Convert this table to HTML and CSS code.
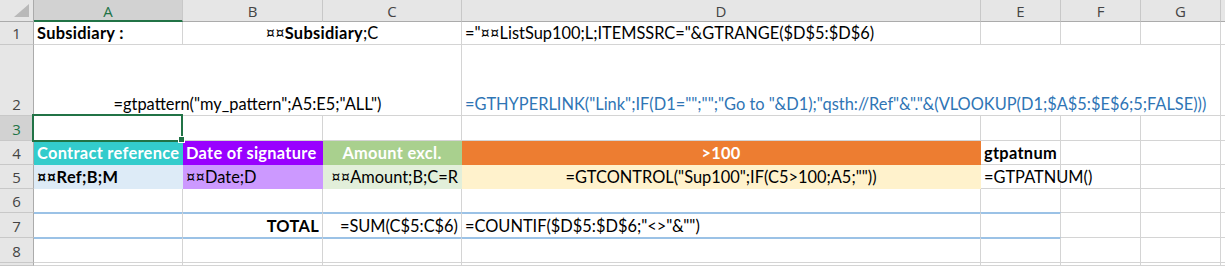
FILE: index.html
```html
<!DOCTYPE html>
<html>
<head>
<meta charset="utf-8">
<link rel="stylesheet" href="styles.css">
</head>
<body>
<div class="sheet">
  <div class="corner"><svg width="18" height="14" viewBox="0 0 18 14"><polygon points="17,0 17,13 2,13" fill="#b9b9b9"/></svg></div>
  <div class="ch ch-sel">A</div>
  <div class="ch">B</div>
  <div class="ch">C</div>
  <div class="ch">D</div>
  <div class="ch">E</div>
  <div class="ch">F</div>
  <div class="ch">G</div>
  <div class="ch ch-end"></div>

  <div class="rh">1</div>
  <div class="c bold">Subsidiary :</div>
  <div class="c span2 center">¤¤<b>Subsidiary</b>;C</div>
  <div class="c">="¤¤ListSup100;L;ITEMSSRC="&amp;GTRANGE($D$5:$D$6)</div>
  <div class="c"></div>
  <div class="c"></div>
  <div class="c"></div>
  <div class="c end"></div>

  <div class="rh">2</div>
  <div class="c span3 center">=gtpattern("my_pattern";A5:E5;"ALL")</div>
  <div class="c span4 link">=GTHYPERLINK("Link";IF(D1="";"";"Go to "&amp;D1);"qsth://Ref"&amp;"."&amp;(VLOOKUP(D1;$A$5:$E$6;5;FALSE)))</div>
  <div class="c end"></div>

  <div class="rh rh-sel">3</div>
  <div class="c active"></div>
  <div class="c"></div>
  <div class="c"></div>
  <div class="c"></div>
  <div class="c"></div>
  <div class="c"></div>
  <div class="c"></div>
  <div class="c end"></div>

  <div class="rh">4</div>
  <div class="c fill hd teal">Contract reference</div>
  <div class="c fill hd purple">Date of signature</div>
  <div class="c fill hd green center">Amount excl.</div>
  <div class="c fill hd orange center">&gt;100</div>
  <div class="c bold">gtpatnum</div>
  <div class="c"></div>
  <div class="c"></div>
  <div class="c end"></div>

  <div class="rh">5</div>
  <div class="c fill bold lblue">¤¤Ref;B;M</div>
  <div class="c fill lpurple">¤¤Date;D</div>
  <div class="c fill lgreen right">¤¤Amount;B;C=R</div>
  <div class="c fill lyellow center">=GTCONTROL("Sup100";IF(C5&gt;100;A5;""))</div>
  <div class="c">=GTPATNUM()</div>
  <div class="c"></div>
  <div class="c"></div>
  <div class="c end"></div>

  <div class="rh">6</div>
  <div class="c above"></div>
  <div class="c above"></div>
  <div class="c above"></div>
  <div class="c above"></div>
  <div class="c above"></div>
  <div class="c"></div>
  <div class="c"></div>
  <div class="c end"></div>

  <div class="rh">7</div>
  <div class="c total"></div>
  <div class="c total bold right">TOTAL</div>
  <div class="c total right">=SUM(C$5:C$6)</div>
  <div class="c total">=COUNTIF($D$5:$D$6;"&lt;&gt;"&amp;"")</div>
  <div class="c total"></div>
  <div class="c"></div>
  <div class="c"></div>
  <div class="c end"></div>

  <div class="rh">8</div>
  <div class="c below"></div>
  <div class="c below"></div>
  <div class="c below"></div>
  <div class="c below"></div>
  <div class="c below"></div>
  <div class="c"></div>
  <div class="c"></div>
  <div class="c end"></div>

  <div class="rh"></div>
  <div class="c"></div>
  <div class="c"></div>
  <div class="c"></div>
  <div class="c"></div>
  <div class="c"></div>
  <div class="c"></div>
  <div class="c"></div>
  <div class="c end"></div>
</div>
</body>
</html>
```
FILE: styles.css
```css
html, body {
  margin: 0;
  padding: 0;
  background: #ffffff;
}

.sheet {
  display: grid;
  grid-template-columns: 34px 149px 140px 139px 519px 80px 80px 80px 1fr;
  grid-template-rows: 22px 23px 71px 25px 24px 24px 24px 25px 25px 1fr;
  width: 1225px;
  height: 266px;
  overflow: hidden;
  font-family: "Lato", "Liberation Sans", sans-serif;
  font-size: 16.4px;
  color: #000;
}

.corner {
  background: #e6e6e6;
  border-right: 1px solid #ababab;
  border-bottom: 1px solid #ababab;
  display: flex;
  align-items: flex-end;
  justify-content: flex-end;
  padding: 0 3px 3px 0;
}

.corner svg { display: block; }

.ch {
  background: #e6e6e6;
  border-right: 1px solid #c8c8c8;
  border-bottom: 1px solid #ababab;
  display: flex;
  align-items: center;
  justify-content: center;
  font-family: "Open Sans", "Noto Sans", sans-serif;
  font-size: 15px;
  color: #444;
  padding-top: 1px;
}

.ch-sel {
  background: #d2d2d2;
  color: #217346;
  border-bottom: 2px solid #217346;
}

.ch-end { border-right: none; }

.rh {
  background: #e6e6e6;
  border-right: 1px solid #ababab;
  border-bottom: 1px solid #c8c8c8;
  display: flex;
  align-items: flex-end;
  justify-content: center;
  font-family: "Open Sans", "Noto Sans", sans-serif;
  font-size: 15px;
  color: #444;
  padding-bottom: 1px;
}

.rh-sel {
  background: #d2d2d2;
  color: #217346;
}

.c {
  border-right: 1px solid #d4d4d4;
  border-bottom: 1px solid #d4d4d4;
  display: flex;
  align-items: flex-end;
  padding: 0 3px 1px 3px;
  white-space: nowrap;
  overflow: visible;
  line-height: 20px;
  min-width: 0;
}

.c.end { border-right: none; }

.span2 { grid-column: span 2; }
.span3 { grid-column: span 3; }
.span4 { grid-column: span 4; }

.center { justify-content: center; }
.right { justify-content: flex-end; }
.bold, b { font-weight: 700; letter-spacing: 0.3px; }

.link { color: #2f75b5; }

.active {
  position: relative;
}
.active::before {
  content: "";
  position: absolute;
  left: -2px;
  top: -2px;
  right: -1px;
  bottom: -2px;
  border: 2px solid #217346;
}
.active::after {
  content: "";
  position: absolute;
  right: -3px;
  bottom: -3px;
  width: 5px;
  height: 5px;
  background: #217346;
  border: 1px solid #fff;
}

.fill { border-color: transparent; }
.hd { color: #fff; font-weight: 700; letter-spacing: 0.3px; }
.teal { background: #33cccc; }
.purple { background: #9900ff; }
.green { background: #a9d08e; }
.orange { background: #ed7d31; }
.lblue { background: #ddebf7; }
.lpurple { background: #cc99ff; }
.lgreen { background: #e2efda; }
.lyellow { background: #fff2cc; }

.above { border-bottom-color: #9bc2e6; }
.total {
  border-bottom-color: #9bc2e6;
  box-shadow: inset 0 1px 0 #9bc2e6;
}
.below { box-shadow: inset 0 1px 0 #9bc2e6; }
```
